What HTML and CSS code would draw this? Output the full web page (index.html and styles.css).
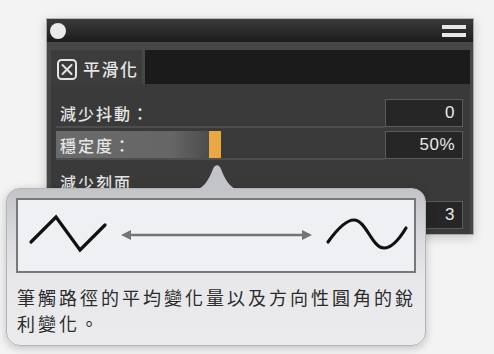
FILE: index.html
```html
<!DOCTYPE html>
<html>
<head>
<meta charset="utf-8">
<link rel="stylesheet" href="styles.css">
</head>
<body>
<div class="panel">
  <div class="titlebar">
    <span class="dot"></span>
    <span class="menu"><i></i><i></i></span>
  </div>
  <div class="frame">
    <div class="toprow">
      <div class="tab">
        <span class="check"><svg width="20" height="21" viewBox="0 0 20 21"><rect x="1" y="1" width="18" height="19" rx="3.5" fill="none" stroke="#e4e4e4" stroke-width="2"/><path d="M5.5 6 L14.5 15 M14.5 6 L5.5 15" stroke="#e4e4e4" stroke-width="2" stroke-linecap="round"/></svg></span>
        <span class="tablabel">平滑化</span>
      </div>
      <div class="field"></div>
    </div>
    <div class="content">
      <div class="row">
        <div class="slider"><span class="label">減少抖動：</span></div>
        <div class="value">0</div>
      </div>
      <div class="row">
        <div class="slider"><div class="fill" style="width:153px"></div><div class="handle"></div><span class="label">穩定度：</span></div>
        <div class="value">50%</div>
      </div>
      <div class="plain">減少刻面</div>
      <div class="row">
        <div class="slider blank"></div>
        <div class="value">3</div>
      </div>
    </div>
  </div>
</div>

<div class="popover">
  <svg class="beak" width="50" height="27" viewBox="0 0 50 27"><path d="M0 27 C12 27 17 16 21 6 C23 1 27 1 29 6 C33 16 38 27 50 27 Z" fill="#c3c4c7"/></svg>
  <div class="illus">
    <svg width="396" height="71" viewBox="0 0 396 71">
      <defs>
        <marker id="ah" markerWidth="4" markerHeight="4" refX="2" refY="2" orient="auto-start-reverse" markerUnits="strokeWidth"><path d="M0 0 L4 2 L0 4 Z" fill="#747474"/></marker>
      </defs>
      <polyline points="13,42 38,17 62,50 87,25" fill="none" stroke="#111" stroke-width="3.2" stroke-linecap="round" stroke-linejoin="miter"/>
      <line x1="108" y1="35" x2="289" y2="35" stroke="#747474" stroke-width="2.5" marker-start="url(#ah)" marker-end="url(#ah)"/>
      <path d="M310 42 C320 28 328 20 336 20 C348 20 354 48 366 48 C374 48 382 38 388 28" fill="none" stroke="#111" stroke-width="3.2" stroke-linecap="round"/>
    </svg>
  </div>
  <p class="desc">筆觸路徑的平均變化量以及方向性圓角的銳利變化。</p>
</div>
</body>
</html>
```

FILE: styles.css
```css
* { box-sizing: border-box; }
html, body { margin: 0; padding: 0; }
body {
  width: 494px;
  height: 354px;
  background: #f3f3f3;
  font-family: "Noto Sans CJK TC", "Noto Sans", sans-serif;
  position: relative;
  overflow: hidden;
  padding-top: 18px;
  padding-left: 46px;
}
.panel {
  width: 428px;
  height: 217px;
  border: 1px solid #a9a9a9;
  border-top-color: #b8b8b8;
  background: #474747;
  box-shadow: 0 3px 10px rgba(0,0,0,0.18);
  display: flex;
  flex-direction: column;
}
.titlebar {
  height: 23px;
  background: linear-gradient(#3b3b3b, #1c1c1c);
  display: flex;
  align-items: center;
  justify-content: space-between;
  padding: 0 7px 0 3px;
}
.dot {
  width: 16px;
  height: 16px;
  border-radius: 50%;
  background: #ebebeb;
}
.menu {
  width: 24px;
  display: flex;
  flex-direction: column;
  gap: 4px;
}
.menu i {
  display: block;
  height: 4px;
  background: #e6e6e6;
}
.frame {
  flex: 1;
  padding: 8px 3px 0 4px;
  display: flex;
  flex-direction: column;
}
.toprow {
  display: flex;
  height: 34px;
}
.tab {
  width: 91px;
  background: #3c3c3c;
  display: flex;
  align-items: center;
  padding-left: 6px;
  padding-top: 4px;
}
.check { display: block; width: 20px; height: 21px; }
.check svg { display: block; }
.tablabel {
  margin-left: 6px;
  color: #e6e6e6;
  font-size: 17px;
  font-weight: 500;
  letter-spacing: 1.5px;
  line-height: 20px;
}
.field {
  flex: 1;
  margin-left: 3px;
  background: #1b1b1b;
}
.content {
  flex: 1;
  background: #3a3a3a;
  padding: 15px 7px 0 5px;
  display: flex;
  flex-direction: column;
  gap: 3px;
}
.row {
  display: flex;
  height: 29px;
}
.slider {
  flex: 1;
  position: relative;
  height: 29px;
  border-bottom: 2px solid #4e4e4e;
  display: flex;
  align-items: center;
}
.fill {
  position: absolute;
  left: 0;
  top: 0;
  bottom: 0;
  background: linear-gradient(90deg, #6a6a6a 0%, #666 75%, #4c4c4c 100%);
}
.handle {
  position: absolute;
  left: 153px;
  top: 0;
  bottom: 0;
  width: 12px;
  background: #e9a842;
}
.label {
  position: relative;
  padding-left: 4px;
  color: #e4e4e4;
  font-size: 16px;
  font-weight: 500;
  letter-spacing: 2px;
  line-height: 20px;
}
.value {
  width: 78px;
  height: 28px;
  background: #262626;
  border: 1px solid #5a5a5a;
  color: #e8e8e8;
  font-family: "Liberation Sans", "Noto Sans", sans-serif;
  font-size: 17px;
  text-align: right;
  padding-right: 7px;
  line-height: 26px;
  letter-spacing: 0.5px;
}
.plain {
  color: #e4e4e4;
  font-size: 16px;
  font-weight: 500;
  letter-spacing: 2px;
  padding-left: 4px;
  height: 32px;
  line-height: 32px;
  margin-top: 3px;
}
.popover {
  position: absolute;
  left: 6px;
  top: 188px;
  width: 420px;
  height: 158px;
  border-radius: 14px;
  background: linear-gradient(#c3c4c7 0%, #dcdde0 35%, #e8e8ea 60%, #ebebed 100%);
  border: 1px solid #b4b5b8;
  box-shadow: 0 2px 9px rgba(0,0,0,0.22);
  padding: 9px 9px 0 9px;
}
.beak {
  position: absolute;
  left: 185px;
  top: -26px;
  display: block;
}
.illus {
  width: 400px;
  height: 75px;
  border: 2px solid #787878;
  background: #eef0f4;
}
.illus svg { display: block; }
.desc {
  margin: 11px 0 0 1px;
  font-size: 18px;
  letter-spacing: 3px;
  line-height: 26px;
  color: #2b2b2b;
  width: 404px;
}
```
